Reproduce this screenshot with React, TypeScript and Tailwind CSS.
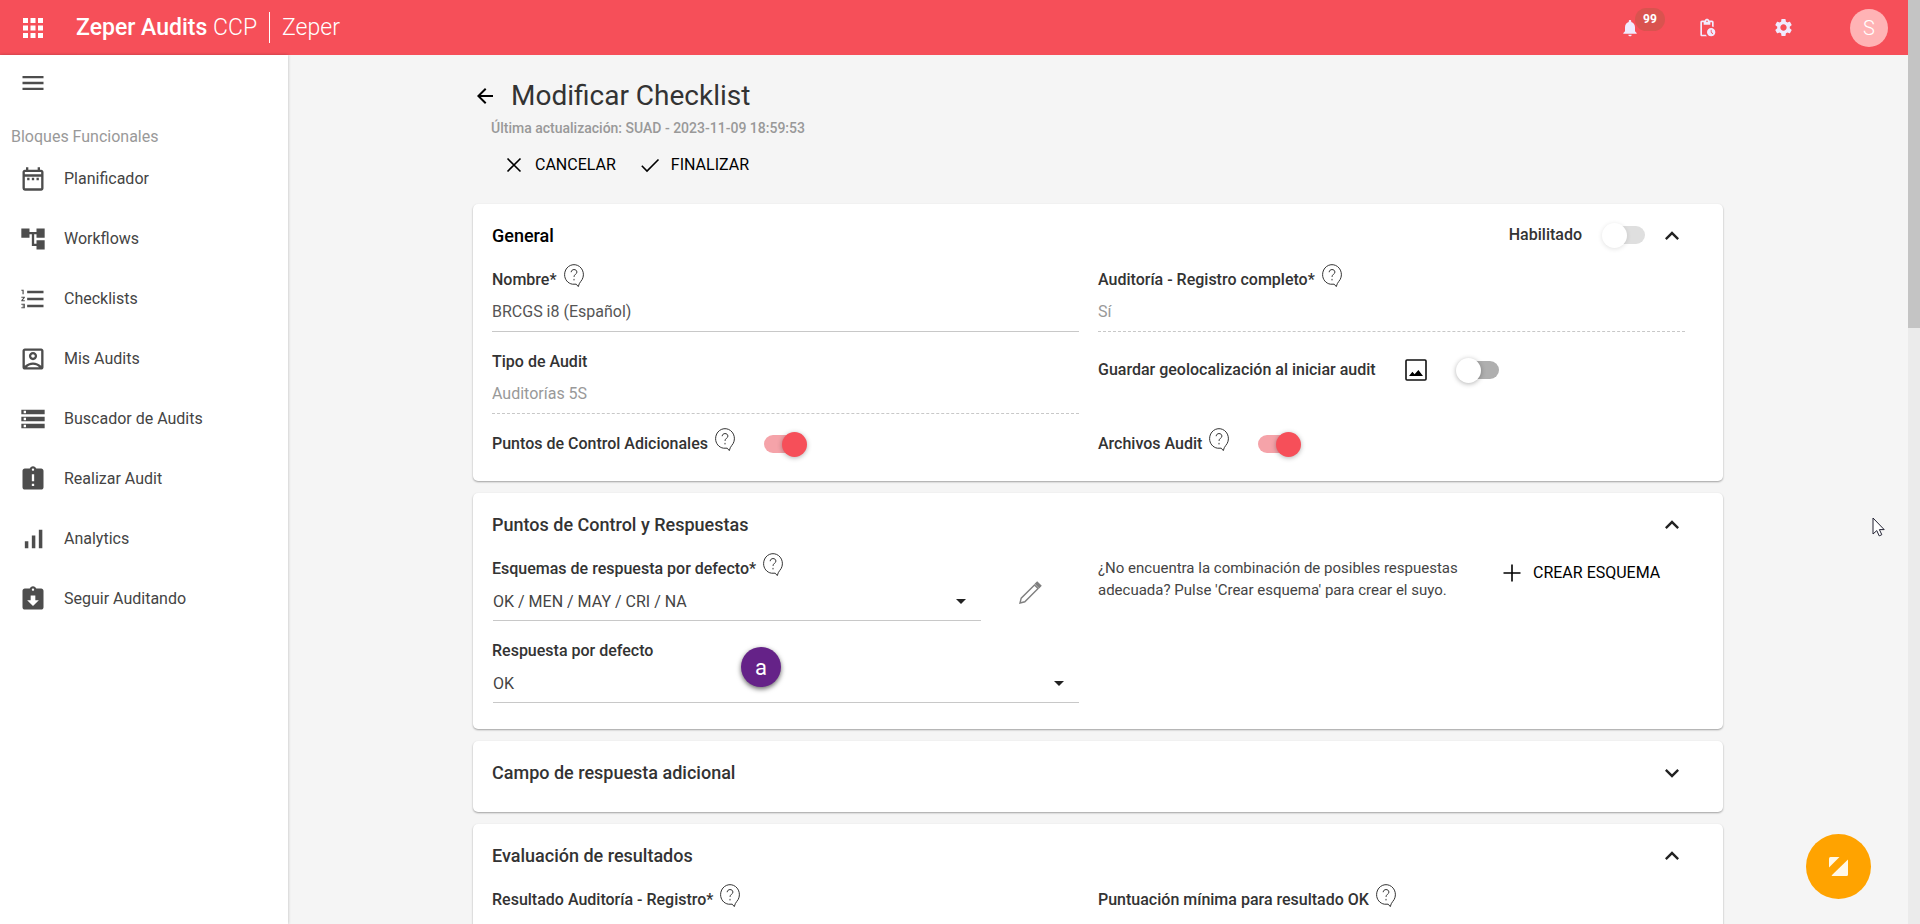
import React, { useState, type ReactNode } from "react";
import {
  MdApps, MdMenu, MdOutlineDateRange, MdAccountTree, MdFormatListNumbered, MdOutlineAccountBox,
  MdStorage, MdAssignmentLate, MdSignalCellularAlt, MdAssignmentReturned, MdNotifications,
  MdPendingActions, MdSettings, MdArrowBack, MdExpandLess, MdExpandMore, MdArrowDropDown,
} from "react-icons/md";
import type { IconType } from "react-icons";

const navItems: { label: string; icon: IconType }[] = [
  { label: "Planificador", icon: MdOutlineDateRange },
  { label: "Workflows", icon: MdAccountTree },
  { label: "Checklists", icon: MdFormatListNumbered },
  { label: "Mis Audits", icon: MdOutlineAccountBox },
  { label: "Buscador de Audits", icon: MdStorage },
  { label: "Realizar Audit", icon: MdAssignmentLate },
  { label: "Analytics", icon: MdSignalCellularAlt },
  { label: "Seguir Auditando", icon: MdAssignmentReturned },
];

function HelpIcon() {
  return (
    <button type="button" aria-label="Ayuda" className="mb-2 ml-[7px] shrink-0">
      <svg width="20" height="24" viewBox="0 0 20 24" fill="none" stroke="#333" strokeWidth="1">
        <path d="M8.5 20.2C3.8 19.5 0.6 15.4 0.6 10.7A9.4 9.9 0 1 1 16.8 17.4C15.6 18.8 14.8 20.4 14.3 22.6L12.2 20.2H8.5" />
        <path d="M7.2 8.2C7.2 4.7 12.9 4.7 12.9 8.1C12.9 10.3 10 10.2 10 12.9" />
        <path d="M10 14.9V16.4" />
      </svg>
    </button>
  );
}

function ThinIcon({ d }: { d: string }) {
  return (
    <svg width="24" height="24" viewBox="0 0 24 24" fill="none" stroke="#000" strokeWidth="1.6">
      <path d={d} />
    </svg>
  );
}

function ImageIcon() {
  return (
    <svg className="mx-[3px] shrink-0" width="22" height="22" viewBox="0 0 22 22">
      <rect x="1" y="1" width="20" height="20" rx="1" fill="none" stroke="#111" strokeWidth="1.6" />
      <path d="M4 17L7.4 12.8L9.6 15.2L13.4 11L18 17Z" fill="#000" />
    </svg>
  );
}

function Toggle({ id, defaultOn = false, muted = false }: { id: string; defaultOn?: boolean; muted?: boolean }) {
  return (
    <span className="relative flex h-6 w-11 shrink-0 items-center">
      <input
        id={id}
        type="checkbox"
        role="switch"
        defaultChecked={defaultOn}
        disabled={muted}
        className="peer absolute inset-0 z-10 m-0 cursor-pointer opacity-0"
      />
      <span className="mx-px h-[18px] w-full rounded-full bg-[#afafaf] peer-checked:bg-[#f5a3a9] peer-disabled:bg-[#dfdfdf]" />
      <span className="absolute left-0 size-[25px] rounded-full bg-white shadow-[0_1px_5px_rgba(0,0,0,0.3)] peer-checked:left-[19px] peer-checked:bg-[#f64f59] peer-disabled:shadow-[0_1px_5px_rgba(0,0,0,0.12)]" />
    </span>
  );
}

function Label({ htmlFor, help, children }: { htmlFor: string; help?: boolean; children: ReactNode }) {
  return (
    <div className="flex h-8 items-center">
      <label htmlFor={htmlFor} className="text-base/6 font-medium text-[#333]">{children}</label>
      {help && <HelpIcon />}
    </div>
  );
}

function TextField({ id, label, value, help, disabled }: { id: string; label: string; value: string; help?: boolean; disabled?: boolean }) {
  return (
    <div>
      <Label htmlFor={id} help={help}>{label}</Label>
      <input
        id={id}
        defaultValue={value}
        disabled={disabled}
        className="block h-9 w-full border-b border-[#c8c8c8] bg-transparent pb-1 text-base text-[#555] outline-none disabled:border-dashed disabled:text-[#999]"
      />
    </div>
  );
}

function SelectField({ id, label, options, help }: { id: string; label: string; options: string[]; help?: boolean }) {
  return (
    <div>
      <Label htmlFor={id} help={help}>{label}</Label>
      <div className="relative ml-px">
        <select id={id} className="block h-9 w-full appearance-none border-b border-[#c8c8c8] bg-transparent pb-px text-base text-[#444] outline-none">
          {options.map((o) => <option key={o}>{o}</option>)}
        </select>
        <MdArrowDropDown className="pointer-events-none absolute top-1 right-2 size-6 text-[#222]" />
      </div>
    </div>
  );
}

function Panel({ title, dark, aside, startOpen = true, children }: { title: string; dark?: boolean; aside?: ReactNode; startOpen?: boolean; children?: ReactNode }) {
  const [open, setOpen] = useState(startOpen);
  return (
    <section className="rounded-[5px] bg-white px-[19px] pt-4 pb-[23px] shadow-[0_1px_2px_rgba(0,0,0,0.35)]">
      <div className="flex h-8 items-center justify-between">
        <h2 className={dark ? "text-lg font-medium text-black" : "text-lg font-medium text-[#333]"}>{title}</h2>
        <div className="mr-[18px] flex items-center">
          {aside}
          <button type="button" aria-label={title} aria-expanded={open} onClick={() => setOpen(!open)}>
            {open ? <MdExpandLess className="size-7 text-[#222]" /> : <MdExpandMore className="size-7 text-[#222]" />}
          </button>
        </div>
      </div>
      {open && children}
    </section>
  );
}

export default function App() {
  return (
    <div className="flex h-screen overflow-hidden bg-[#f5f5f5] font-[Roboto,sans-serif] text-[#333]">
      <div className="flex min-w-0 flex-1 flex-col">
        <header className="flex h-[55px] shrink-0 items-center bg-[#f64f59] pr-5 pl-[18px] text-white">
          <button type="button" aria-label="Aplicaciones"><MdApps className="size-[30px]" /></button>
          <div className="ml-7 flex items-center text-[23px]/8">
            <span><span className="font-medium">Zeper Audits</span> <span className="font-light">CCP</span></span>
            <span className="mx-3 h-[31px] w-px bg-white" />
            <span className="font-light">Zeper</span>
          </div>
          <div className="ml-auto flex items-center text-[#f0ebff]">
            <button type="button" aria-label="Notificaciones" className="relative mr-[57px]">
              <MdNotifications className="size-5" />
              <span className="absolute -top-[10px] left-[15px] flex h-[23px] w-[30px] items-center justify-center rounded-full bg-[#d9534f] text-xs font-bold text-white">99</span>
            </button>
            <button type="button" aria-label="Pendientes" className="mr-14"><MdPendingActions className="size-5" /></button>
            <button type="button" aria-label="Ajustes" className="mr-14"><MdSettings className="size-[21px]" /></button>
            <button type="button" aria-label="Usuario" className="flex size-[38px] items-center justify-center rounded-full bg-[#ffb3b5] text-xl font-light text-white">S</button>
          </div>
        </header>

        <div className="flex min-h-0 flex-1">
          <aside className="w-72 shrink-0 bg-white shadow-[0_0_3px_rgba(0,0,0,0.25)]">
            <button type="button" aria-label="Menú" className="mt-[14px] ml-[19px] block"><MdMenu className="size-7 text-[#4d4d4d]" /></button>
            <h2 className="mt-7 ml-[11px] text-base/6 text-[#999]">Bloques Funcionales</h2>
            <nav className="flex flex-col">
              {navItems.map(({ label, icon: Icon }) => (
                <a key={label} href="#" className="flex h-[60px] items-center gap-[17px] pl-[19px] text-base text-[#444]">
                  <Icon className="size-7 text-[#4d4d4d]" />
                  {label}
                </a>
              ))}
            </nav>
          </aside>

          <main className="min-w-0 flex-1 overflow-hidden px-4">
            <div className="mx-auto max-w-[1250px]">
              <div className="flex items-center gap-[14px] pt-[21px]">
                <button type="button" aria-label="Volver"><MdArrowBack className="size-6 text-black" /></button>
                <h1 className="text-[28px]/10 text-[#333]">Modificar Checklist</h1>
              </div>
              <p className="ml-[18px] text-sm/6 font-medium text-[#999]">Última actualización: SUAD - 2023-11-09 18:59:53</p>
              <div className="mt-[5px] mb-[19px] ml-[29px] flex items-center gap-[22px] text-base/10 text-black">
                <button type="button" className="flex items-center gap-[9px]"><ThinIcon d="M5.5 5.5L18.5 18.5M18.5 5.5L5.5 18.5" />CANCELAR</button>
                <button type="button" className="flex items-center gap-[9px]"><ThinIcon d="M3.8 12.8L9 18L20.5 6.5" />FINALIZAR</button>
              </div>

              <div className="flex flex-col gap-3">
                <Panel
                  title="General"
                  dark
                  aside={
                    <div className="mr-3 mb-0.5 flex items-center gap-5">
                      <Label htmlFor="habilitado">Habilitado</Label>
                      <Toggle id="habilitado" muted />
                    </div>
                  }
                >
                  <div className="mt-3 -mb-0.5 grid grid-cols-2 gap-y-[14px]">
                    <div className="pr-[19px]"><TextField id="nombre" label="Nombre*" value="BRCGS i8 (Español)" help /></div>
                    <div className="pr-[19px]"><TextField id="registro" label="Auditoría - Registro completo*" value="Sí" help disabled /></div>
                    <div className="pr-[19px]"><TextField id="tipo" label="Tipo de Audit" value="Auditorías 5S" disabled /></div>
                    <div className="mt-2 flex h-8 items-center gap-[26px]">
                      <Label htmlFor="geo">Guardar geolocalización al iniciar audit</Label>
                      <ImageIcon />
                      <Toggle id="geo" />
                    </div>
                    <div className="flex h-8 items-center gap-7">
                      <Label htmlFor="puntos" help>Puntos de Control Adicionales</Label>
                      <Toggle id="puntos" defaultOn />
                    </div>
                    <div className="flex h-8 items-center gap-7">
                      <Label htmlFor="archivos" help>Archivos Audit</Label>
                      <Toggle id="archivos" defaultOn />
                    </div>
                  </div>
                </Panel>

                <Panel title="Puntos de Control y Respuestas">
                  <div className="mt-3 mb-[3px] grid grid-cols-2 gap-y-[14px]">
                    <div className="flex items-center pr-[19px]">
                      <div className="flex-1"><SelectField id="esquema" label="Esquemas de respuesta por defecto*" options={["OK / MEN / MAY / CRI / NA"]} help /></div>
                      <button type="button" aria-label="Editar esquema" className="mx-9 mt-3">
                        <svg width="26" height="26" viewBox="0 0 26 26" fill="none" stroke="#808080" strokeWidth="1.4">
                          <path d="M3 23L4.2 18.2L17.5 4.9L21.1 8.5L7.8 21.8Z" />
                          <path d="M18.6 3.8L20.2 2.2L23.8 5.8L22.2 7.4Z" fill="#808080" />
                        </svg>
                      </button>
                    </div>
                    <div className="flex items-start">
                      <p className="w-[392px] pt-1 text-[15px]/[22px] text-[#444]">
                        ¿No encuentra la combinación de posibles respuestas adecuada? Pulse 'Crear esquema' para crear el suyo.
                      </p>
                      <button type="button" className="ml-[10px] flex h-10 items-center gap-[9px] text-base text-black"><ThinIcon d="M12 3.5V20.5M3.5 12H20.5" />CREAR ESQUEMA</button>
                    </div>
                    <div className="relative pr-[19px]">
                      <SelectField id="respuesta" label="Respuesta por defecto" options={["OK"]} />
                      <span className="absolute top-3 left-[249px] flex size-10 items-center justify-center rounded-full bg-[#652288] text-[22px] text-white shadow-[0_2px_5px_rgba(0,0,0,0.6)]">a</span>
                    </div>
                  </div>
                </Panel>

                <Panel title="Campo de respuesta adicional" startOpen={false} />

                <Panel title="Evaluación de resultados">
                  <div className="mt-3 grid grid-cols-2">
                    <div className="pr-[19px]"><SelectField id="resultado" label="Resultado Auditoría - Registro*" options={["Sí"]} help /></div>
                    <div className="pr-[19px]"><TextField id="puntuacion" label="Puntuación mínima para resultado OK" value="" help /></div>
                  </div>
                </Panel>
              </div>
            </div>
          </main>
        </div>
      </div>
      <div className="w-3 shrink-0 bg-[#ebebeb]"><div className="h-[328px] bg-[#c4c4c4]" /></div>
      <button type="button" aria-label="Soporte" className="fixed right-[49px] bottom-[25px] flex size-[65px] items-center justify-center rounded-full bg-[#ffa300]">
        <svg width="19" height="19" viewBox="0 0 19 19" fill="#fff8e8">
          <path d="M1.5 0H10.5L0 10.5V1.5Q0 0 1.5 0Z" />
          <path d="M19 2.5V17.5Q19 19 17.5 19H3.5L2.5 18.5Z" />
        </svg>
      </button>
      <svg className="pointer-events-none fixed top-[517px] right-[35px]" width="13" height="20" viewBox="0 0 13 20" fill="#fff" stroke="#223" strokeWidth="1">
        <path d="M1 1V17L4.8 13.6L7.2 18.9L9.8 17.7L7.4 12.6H12.2Z" />
      </svg>
    </div>
  );
}
